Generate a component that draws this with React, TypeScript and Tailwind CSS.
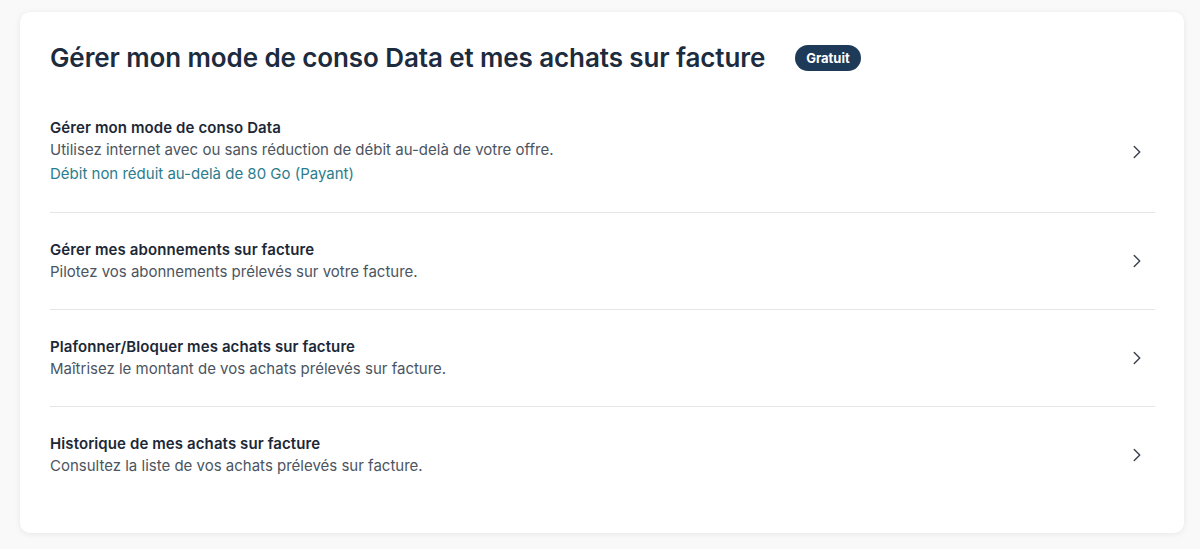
import React from 'react';
import { ChevronRight } from 'lucide-react';

const rows = [
  {
    title: 'Gérer mon mode de conso Data',
    desc: 'Utilisez internet avec ou sans réduction de débit au-delà de votre offre.',
    link: 'Débit non réduit au-delà de 80 Go (Payant)',
  },
  { title: 'Gérer mes abonnements sur facture', desc: 'Pilotez vos abonnements prélevés sur votre facture.' },
  { title: 'Plafonner/Bloquer mes achats sur facture', desc: 'Maîtrisez le montant de vos achats prélevés sur facture.' },
  { title: 'Historique de mes achats sur facture', desc: 'Consultez la liste de vos achats prélevés sur facture.' },
];

const Row = ({ title, desc, link, last }) => (
  <div className={`flex items-center justify-between py-[26px] ${last ? '' : 'border-b border-[#e4e6e8]'}`}>
    <div className="flex flex-col">
      <span className="text-[15px] leading-[22px] font-semibold text-[#1c2837] tracking-[0.1px]">{title}</span>
      <span className="text-[15px] leading-[22px] text-[#4b5561]">{desc}</span>
      {link && <span className="text-[15px] leading-[24px] mt-[1px] text-[#2b7d8d]">{link}</span>}
    </div>
    <ChevronRight size={22} strokeWidth={1.6} className="text-[#3b4450] mr-[7px]" />
  </div>
);

export default function App() {
  return (
    <div className="w-[1200px] h-[549px] bg-[#f9f9f9] pt-[12px] px-[20px] font-['Inter',sans-serif]">
      <div className="w-[1164px] h-[521px] bg-white rounded-[10px] shadow-[0_1px_6px_rgba(0,0,0,0.08)] pl-[30px] pr-[29px] pt-[30px]">
        <div className="flex items-center gap-[30px] mb-[17px]">
          <h1 className="text-[26px] leading-[32px] font-semibold text-[#1c2b3d] tracking-[-0.1px]">
            Gérer mon mode de conso Data et mes achats sur facture
          </h1>
          <span className="bg-[#1d3a58] text-white text-[13px] font-bold leading-[26px] px-[11px] rounded-full">Gratuit</span>
        </div>
        <div className="flex flex-col">
          {rows.map((r, i) => (
            <Row key={i} {...r} last={i === rows.length - 1} />
          ))}
        </div>
      </div>
    </div>
  );
}
